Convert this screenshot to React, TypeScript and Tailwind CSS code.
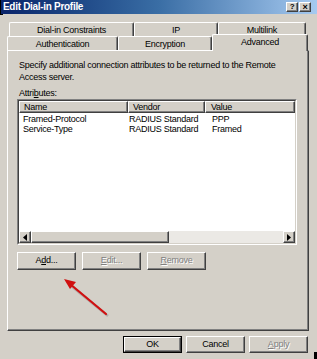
import React from "react";

const raised =
  "border-t border-l border-t-white border-l-white border-r border-b border-r-[#404040] border-b-[#404040] shadow-[inset_-1px_-1px_0_#808080]";

function Tab({ label, w, selected }: { label: string; w: string; selected?: boolean }) {
  if (selected) {
    return (
      <div
        className={`${w} h-[17px] -mb-[1px] relative z-10 bg-[#d4d0c8] border-t border-l border-white border-r border-r-[#404040] rounded-t-[2px] shadow-[inset_-1px_0_0_#808080] flex justify-center pt-[1px] leading-[12px]`}
      >
        {label}
      </div>
    );
  }
  return (
    <div
      className={`${w} h-[14px] bg-[#d4d0c8] border-t border-l border-white border-r border-r-[#404040] rounded-t-[2px] shadow-[inset_-1px_0_0_#808080] flex justify-center pt-[1px] leading-[12px]`}
    >
      {label}
    </div>
  );
}

function Btn({
  children,
  w = "w-[59px]",
  h = "h-[18px]",
  disabled,
  def,
}: {
  children: React.ReactNode;
  w?: string;
  h?: string;
  disabled?: boolean;
  def?: boolean;
}) {
  return (
    <div className={`${w} ${h} ${def ? "border border-black" : ""} flex`}>
      <div
        className={`flex-1 flex items-center justify-center ${raised} ${
          disabled ? "text-[#808080] [text-shadow:1px_1px_0_#fff]" : "text-black"
        }`}
      >
        {children}
      </div>
    </div>
  );
}

export default function App() {
  return (
    <div className="w-[317px] h-[359px] bg-[#d4d0c8] relative overflow-hidden font-['Liberation_Sans',Arial,sans-serif] text-[9px] tracking-[-0.25px] text-black">
      {/* title bar */}
      <div className="h-[14px] border-l border-black bg-gradient-to-r from-[#0a246a] via-[#3a6ea5] to-[#a6caf0] flex items-center justify-between pl-[2px] pr-[6px]">
        <span className="text-white font-bold text-[10px] tracking-[-0.3px] leading-none">Edit Dial-in Profile</span>
        <div className="flex gap-[1px]">
          <div className={`w-[12px] h-[10px] bg-[#d4d0c8] ${raised} flex items-center justify-center font-bold text-[8px] leading-none`}>?</div>
          <div className={`w-[12px] h-[10px] bg-[#d4d0c8] ${raised} flex items-center justify-center font-bold text-[9px] leading-none`}>×</div>
        </div>
      </div>
      <div className="w-[3px] h-[1px] bg-black" />

      {/* tabs */}
      <div className="mt-[7px] ml-[9px] flex">
        <Tab label="Dial-in Constraints" w="w-[125px]" />
        <Tab label="IP" w="w-[84px]" />
        <Tab label="Multilink" w="w-[88px]" />
      </div>
      <div className="ml-[7px] h-[14px] flex items-end">
        <Tab label="Authentication" w="w-[111px]" />
        <Tab label="Encryption" w="w-[94px]" />
        <Tab label="Advanced" w="w-[96px]" selected />
      </div>

      {/* panel */}
      <div className="ml-[7px] w-[302px] h-[281px] border-t border-l border-white border-r border-b border-r-[#404040] border-b-[#404040] shadow-[inset_-1px_-1px_0_#808080] pl-[9px] pt-[8px]">
        <p className="pl-[2px] leading-[12px]">
          Specify additional connection attributes to be returned to the Remote
          <br />
          Access server.
        </p>
        <p className="pl-[2px] mt-[4px] leading-[12px]">
          Attri<span className="underline">b</span>utes:
        </p>

        {/* list */}
        <div className="w-[280px] h-[146px] border border-t-[#808080] border-l-[#808080] border-r-white border-b-white">
          <div className="h-full border border-t-[#404040] border-l-[#404040] border-r-[#d4d0c8] border-b-[#d4d0c8] bg-white flex flex-col">
            <div className="h-[12px] flex bg-[#d4d0c8] leading-[10px]">
              <div className={`w-[109px] pl-[4px] ${raised}`}>Name</div>
              <div className={`w-[77px] pl-[4px] ${raised}`}>Vendor</div>
              <div className={`flex-1 pl-[5px] ${raised}`}>Value</div>
            </div>
            <div className="flex-1 pt-[1px]">
              {[
                ["Framed-Protocol", "RADIUS Standard", "PPP"],
                ["Service-Type", "RADIUS Standard", "Framed"],
              ].map(([a, b, c]) => (
                <div key={a} className="flex h-[10px] leading-[10px]">
                  <div className="w-[109px] pl-[4px]">{a}</div>
                  <div className="w-[77px] pl-[1px]">{b}</div>
                  <div className="flex-1 pl-[7px]">{c}</div>
                </div>
              ))}
            </div>
            {/* scrollbar */}
            <div className="h-[12px] flex bg-[#ebe9e5]">
              <div className={`w-[12px] bg-[#d4d0c8] ${raised} flex items-center justify-center`}>
                <svg width="4" height="7" viewBox="0 0 4 7">
                  <path d="M4 0 L0 3.5 L4 7 Z" fill="#000" />
                </svg>
              </div>
              <div className={`w-[138px] bg-[#d4d0c8] ${raised}`} />
              <div className="flex-1" />
              <div className={`w-[12px] bg-[#d4d0c8] ${raised} flex items-center justify-center`}>
                <svg width="4" height="7" viewBox="0 0 4 7">
                  <path d="M0 0 L4 3.5 L0 7 Z" fill="#000" />
                </svg>
              </div>
            </div>
          </div>
        </div>

        <div className="mt-[7px] flex gap-[6px]">
          <Btn>
            A<span className="underline">d</span>d...
          </Btn>
          <Btn disabled>
            <span className="underline">E</span>dit...
          </Btn>
          <Btn disabled>
            <span className="underline">R</span>emove
          </Btn>
        </div>
      </div>

      {/* dialog buttons */}
      <div className="mt-[5px] pr-[9px] flex justify-end gap-[4px]">
        <Btn h="h-[17px]" def>
          OK
        </Btn>
        <Btn h="h-[17px]">Cancel</Btn>
        <Btn h="h-[17px]" disabled>
          <span className="underline">A</span>pply
        </Btn>
      </div>

      {/* annotation arrow */}
      <svg className="absolute left-0 top-0 pointer-events-none" width="317" height="359">
        <line x1="108" y1="316" x2="70" y2="285" stroke="#9a9a9a" strokeWidth="2.5" opacity="0.6" />
        <line x1="106" y1="314" x2="70" y2="284" stroke="#d01010" strokeWidth="2.2" strokeLinecap="round" />
        <path d="M64 279 L76 282 L70 289 Z" fill="#d01010" />
      </svg>
      <div className="absolute right-0 bottom-0 w-[3px] h-[7px] bg-black" />
    </div>
  );
}
